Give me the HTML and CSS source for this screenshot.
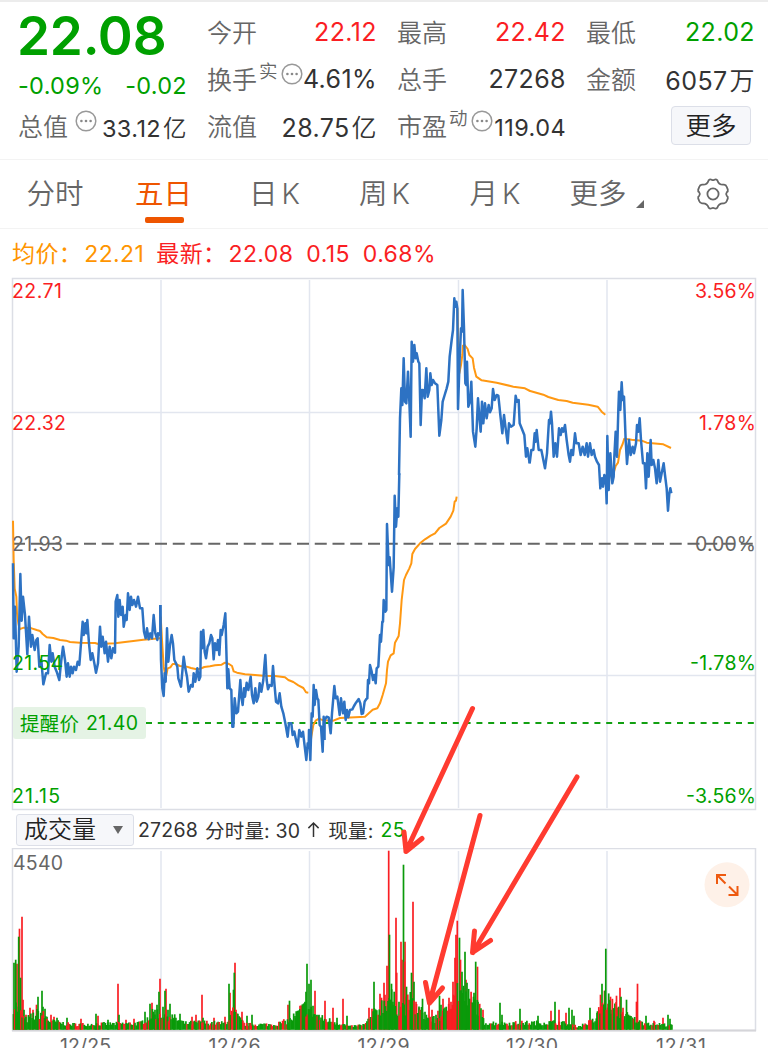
FILE: index.html
```html
<!DOCTYPE html>
<html lang="zh-CN">
<head>
    <meta charset="UTF-8">
    <meta name="viewport" content="width=device-width, initial-scale=1.0">
    <title>五日分时</title>
    <link rel="stylesheet" href="styles.css">
</head>
<body>
    <svg width="0" height="0" class="defs">
        <symbol id="dots" viewBox="0 0 22 22">
            <circle cx="11" cy="11" r="9.8" fill="none" stroke="#999" stroke-width="1.5"/>
            <circle cx="6.4" cy="11" r="1.3" fill="#888"/>
            <circle cx="11" cy="11" r="1.3" fill="#888"/>
            <circle cx="15.6" cy="11" r="1.3" fill="#888"/>
        </symbol>
    </svg>

    <header class="quote">
        <div class="main-col">
            <div class="price">22.08</div>
            <div class="change"><span>-0.09%</span><span>-0.02</span></div>
            <div class="cell small"><span class="label">总值</span><svg class="dots"><use href="#dots"/></svg><span class="value">33.12<i>亿</i></span></div>
        </div>
        <div class="col">
            <div class="cell"><span class="label">今开</span><span class="value red">22.12</span></div>
            <div class="cell"><span class="label">换手</span><sup>实</sup><svg class="dots"><use href="#dots"/></svg><span class="value">4.61%</span></div>
            <div class="cell"><span class="label">流值</span><span class="value">28.75<i>亿</i></span></div>
        </div>
        <div class="col">
            <div class="cell"><span class="label">最高</span><span class="value red">22.42</span></div>
            <div class="cell"><span class="label">总手</span><span class="value">27268</span></div>
            <div class="cell small"><span class="label">市盈</span><sup>动</sup><svg class="dots"><use href="#dots"/></svg><span class="value">119.04</span></div>
        </div>
        <div class="col">
            <div class="cell"><span class="label">最低</span><span class="value green">22.02</span></div>
            <div class="cell"><span class="label">金额</span><span class="value">6057<i>万</i></span></div>
            <div class="cell"><button class="more">更多</button></div>
        </div>
    </header>

    <nav class="tabs">
        <a>分时</a>
        <a class="active">五日</a>
        <a>日<b>K</b></a>
        <a>周<b>K</b></a>
        <a>月<b>K</b></a>
        <a class="drop">更多</a>
        <a>
            <svg class="gear" viewBox="0 0 34 34">
                <path d="M12.6 3.4 Q14 1.8 15.6 2.7 Q17 3.6 18.4 2.7 Q20 1.8 21.4 3.4 C22.6 7.2 24.4 8 28 7.6 Q30 7.8 30.8 10 L31.8 12.6 Q32.2 14.3 30.8 15.2 Q29.4 17 30.8 18.8 Q32.2 19.7 31.8 21.4 L30.8 24 Q30 26.2 28 26.4 C24.4 26 22.6 26.8 21.4 30.6 Q20 32.2 18.4 31.3 Q17 30.4 15.6 31.3 Q14 32.2 12.6 30.6 C11.4 26.8 9.6 26 6 26.4 Q4 26.2 3.2 24 L2.2 21.4 Q1.8 19.7 3.2 18.8 Q4.6 17 3.2 15.2 Q1.8 14.3 2.2 12.6 L3.2 10 Q4 7.8 6 7.6 C9.6 8 11.4 7.2 12.6 3.4Z"/>
                <circle cx="17" cy="17" r="5.6"/>
            </svg>
        </a>
    </nav>

    <div class="legend">
        <span class="orange">均价：</span><span class="orange n1">22.21</span>
        <span class="red">最新：</span><span class="red n2">22.08</span><span class="red n3">0.15</span><span class="red n4">0.68%</span>
    </div>

    <main class="charts">
        <svg class="price-chart" viewBox="0 277 768 534">
            <g class="grid">
                <path d="M161 280V808M309.5 280V808M458.5 280V808M607 280V808M12 412.5H755M12 675.5H755"/>
                <path class="frame" d="M12.5 278.5H755.5V809.5H12.5Z"/>
            </g>
            <path class="mid-line" d="M13 543.8H755"/>
            <path class="alert-line" d="M146 723H755"/>

            <g class="avg">
                <polyline transform="translate(0 500) scale(.33333)" points="39,62 41,180 44,265 49,290 51,340 55,370 59,388 63,386 72,383 95,385 110,390 120,393 128,402 140,412 160,414 180,420 198,422 210,426 240,428 285,429 295,432 345,430 375,426 400,423 430,419 481,415"/>
                <polyline transform="translate(155 580) scale(.33333)" points="17,110 21,180 26,260 30,283 34,285 38,265 46,262 53,252 62,252 75,258 95,260 108,264 125,268 137,266 148,261 165,259 180,256 200,254 210,248 222,252 231,258 236,274 246,278 270,283 300,285 325,287 360,288 390,292 400,300 415,306 430,316 445,324 453,337 460,338"/>
                <polyline transform="translate(300 480) scale(.33333)" points="30,800 34,770 40,735 47,722 57,716 70,721 100,722 120,714 195,710 218,689 232,685 240,670 248,645 258,610 261,570 264,545 272,526 281,520 285,488 296,468 300,430 305,360 312,300 318,285 328,265 334,250 337,222 345,207 360,190 375,178 392,167 405,160 418,144 438,131 452,110 460,92 464,65 468,62 470,50"/>
                <polyline transform="translate(380 275) scale(.33333)" points="232,100 238,295 243,270 247,240 249,212 254,210 263,222 268,240 278,250 282,278 289,305 305,316 350,323 400,335 435,340 450,348"/>
                <polyline transform="translate(500 360) scale(.33333)" points="88,92 130,104 145,111 175,120 200,123 218,128 265,134 293,140 305,155 316,164"/>
                <polyline transform="translate(500 360) scale(.33333)" points="320,385 330,345 342,335 347,318 354,308 360,270 368,252 373,236 395,239 425,242 440,248 490,253 513,264"/>
            </g>

            <g class="price-line">
                <polyline transform="translate(0 500) scale(.33333)" points="39,190 41,415 45,320 50,515 56,440 61,222 65,362 69,290 75,345 82,463 87,350 93,440 97,405 104,450 109,420 113,415 118,500 124,480 130,553 138,520 144,520 149,435 154,485 158,460 164,500 170,515 178,540 184,480 189,440 195,480 200,530 204,490 209,530 213,500 218,520 222,500 228,510 233,485 238,495 243,430 248,365 251,405 256,370 259,400 262,360 267,430 272,480 277,460 283,490 288,518 294,490 300,380 304,440 308,410 314,460 318,425 324,485 329,440 334,475 339,445 345,458 347,305 352,285 355,350 359,300 363,345 368,320 371,380 377,345 380,360 384,280 389,330 393,290 397,315 402,300 408,320 414,290 420,325 427,325 432,395 437,415 441,385 446,418 451,400 456,415 461,345 466,400 472,420 474,400 481,405 481,315"/>
                <polyline transform="translate(155 580) scale(.33333)" points="16,75 18,240 22,325 26,348 29,280 32,305 36,145 40,245 45,195 50,165 54,190 58,240 63,250 67,260 70,295 78,320 82,275 86,230 91,265 96,290 101,335 108,315 113,320 116,280 121,305 127,265 132,300 136,290 138,155 141,205 145,150 149,215 153,235 158,200 163,190 168,165 172,175 176,238 180,190 185,210 189,180 193,225 197,150 200,165 206,135 211,100 215,245 217,325 220,268 224,325 229,330 232,440 235,440 239,355 244,400 249,395 256,300 259,350 263,375 267,325 270,350 275,308 280,330 287,290 291,345 296,370 301,325 305,365 310,350 314,310 319,335 325,300 328,260 331,225 335,300 339,328 344,315 350,318 354,258 359,320 363,365 369,370 374,340 379,380 385,400 391,430 398,470 402,430 409,430 413,465 418,455 423,480 428,500 433,450 439,470 444,455 448,490 454,540 458,490 461,500 462,450 466,540 470,400 473,410 476,315 479,375 483,330 487,355 490,360 494,435 498,440 503,515 506,410 508,480"/>
                <polyline transform="translate(300 480) scale(.33333)" points="73,780 74,720 80,710 86,712 92,760 96,700 103,618 107,655 112,650 119,705 123,655 129,700 133,665 137,720 141,690 145,712 150,690 157,688 162,678 168,668 176,657 181,670 185,702 189,700 194,665 199,657 202,655 204,600 207,610 210,555 215,575 219,600 223,585 227,610 230,565 235,560 240,465 243,485 247,425 249,425 251,360 256,395 259,390 261,132 266,255 269,232 276,335 281,262 284,47 288,140 292,85 295,110 298,-20"/>
                <polyline transform="translate(380 275) scale(.33333)" points="57,600 60,430 64,340 67,390 71,250 75,380 79,385 84,290 88,380 92,485 95,200 99,260 103,210 107,250 110,235 115,260 118,265 122,450 126,345 129,345 134,370 139,280 143,365 148,345 151,295 155,330 159,315 165,325 172,330 178,482 184,435 188,380 194,360 200,340 205,320 209,245 215,195 219,165 223,70 226,95 229,80 232,100 234,402 239,250 243,160 246,170 248,45 252,160 256,325 259,330 261,260 265,395 270,380 274,320 279,470 286,515 290,460 294,370 298,425 302,470 306,380 310,445 315,385 320,430 326,390 330,412 335,400 339,342 344,375 350,360 355,362 361,420 367,475 372,420 377,460 383,505 387,445 393,455 401,450 407,362 411,380 416,375 419,445 425,460 433,480 438,545 442,520 449,565"/>
                <polyline transform="translate(500 360) scale(.33333)" points="89,310 94,270 100,270 104,220 107,245 110,210 116,270 124,270 130,300 135,325 141,280 147,180 150,190 153,155 156,190 161,290 166,250 171,290 177,205 182,225 186,205 190,215 195,195 200,240 206,285 210,305 214,270 219,285 225,220 229,250 236,250 242,285 248,260 254,285 260,250 264,290 270,250 275,285 281,270 285,290 291,305 297,315 301,385 306,355 309,380 313,345 318,375 320,430 322,228 326,390 331,280 337,370 341,350 343,290 347,215 351,290 355,150 357,95 361,150 365,67 368,120 372,110 377,240 381,312 387,240 392,285 398,260 402,280 408,250 411,195 415,215 419,175 423,240 429,310 434,310 438,385 442,280 446,350 452,240 455,315 460,300 465,325 470,370 475,300 480,365 485,340 491,310 495,345 500,385 504,452 508,400 511,385 514,400"/>
            </g>

            <rect x="13" y="707" width="133" height="32" rx="3" fill="#e5f3e5"/>
            <g class="axis">
                <text class="t-red" x="12" y="298" textLength="50">22.71</text>
                <text class="t-red" x="12" y="430" textLength="54">22.32</text>
                <text class="t-gray" x="12" y="550.5" textLength="51">21.93</text>
                <text class="t-green" x="12" y="670" textLength="51">21.54</text>
                <text class="t-green" x="12" y="802.5" textLength="48">21.15</text>
                <text class="t-red" x="695" y="298" textLength="61">3.56%</text>
                <text class="t-red" x="699" y="430" textLength="57">1.78%</text>
                <text class="t-gray" x="695" y="550.5" textLength="61">0.00%</text>
                <text class="t-green" x="690" y="670" textLength="66">-1.78%</text>
                <text class="t-green" x="686" y="802.5" textLength="70">-3.56%</text>
                <text class="t-green" x="20" y="730.5" textLength="59">提醒价</text>
                <text class="t-green" x="86" y="730" textLength="52">21.40</text>
            </g>
        </svg>

        <div class="indicator">
            <button class="select">成交量<span class="caret"></span></button>
            <span>27268</span>
            <span>分时量: 30</span>
            <svg class="up" viewBox="0 0 14 18"><path d="M7 17V2M1.5 7.5L7 2L12.5 7.5"/></svg>
            <span>现量:</span>
            <span class="green">25</span>
        </div>

        <svg class="volume-chart" viewBox="0 848 768 200">
            <g class="grid">
                <path d="M161 851V1030M309.5 851V1030M458.5 851V1030M607 851V1030"/>
                <path class="frame" d="M12.5 848.5H755.5V1030.5H12.5Z"/>
                <path class="base" d="M12 1030.5H756"/>
            </g>
            <g id="bars"></g>
            <g class="axis">
                <text class="t-gray" x="13" y="870" textLength="50">4540</text>
                <text class="t-gray" x="60" y="1052.5" textLength="51">12/25</text>
                <text class="t-gray" x="208.5" y="1052.5" textLength="52">12/26</text>
                <text class="t-gray" x="357.5" y="1052.5" textLength="52">12/29</text>
                <text class="t-gray" x="506" y="1052.5" textLength="52">12/30</text>
                <text class="t-gray" x="656" y="1052.5" textLength="50">12/31</text>
            </g>
            <circle cx="727" cy="884.7" r="22.5" fill="#fef1e8"/>
            <path class="expand" d="M717 884V875H726M717.5 875.5L725.5 883.5M737.500 886V895H728.500M737 894.500L729 886.500"/>
        </svg>

        <svg class="arrows" viewBox="0 277 768 771">
            <path d="M472.500 708.500L406 851.500M404 832L406 851.500L422 838.500"/>
            <path d="M480 815.500L429.500 1003M425.500 982.500L429.500 1003L442.500 988"/>
            <path d="M577 777L473 952.500M474.500 931L472.500 952.500L490.500 940.500"/>
        </svg>
    </main>

    <script src="volume.js"></script>
</body>
</html>
```
FILE: styles.css
```css
* {
    box-sizing: border-box;
}
body {
    margin: 0;
    width: 768px;
    height: 1048px;
    overflow: hidden;
    background: #fff;
    color: #333;
    font-family: Inter, "Noto Sans CJK SC", sans-serif;
}
.defs {
    position: absolute;
}
i, b {
    font-style: normal;
    font-weight: 400;
}
.red { color: #fa1e23; }
.green { color: #00a000; }
.orange { color: #ff9500; }

/* quote header */
.quote {
    display: grid;
    grid-template-columns: 169px 170px 169px 169px;
    column-gap: 20px;
    height: 160px;
    padding: 6px 14px 0 18px;
    border-top: 2px solid #ececec;
    border-bottom: 1px solid #f3f3f3;
    font-size: 25px;
}
.price {
    height: 55px;
    line-height: 56px;
    margin-left: -1px;
    font-size: 53px;
    font-weight: 600;
    letter-spacing: -0.2px;
    color: #00a000;
}
.change {
    display: flex;
    justify-content: space-between;
    height: 39px;
    line-height: 45px;
    font-size: 23.5px;
    letter-spacing: 0.3px;
    color: #00a000;
}
.cell {
    display: flex;
    align-items: center;
    height: 47px;
    white-space: nowrap;
}
.label {
    color: #666;
    font-weight: 350;
    position: relative;
    top: -1px;
}
.value {
    margin-left: auto;
    letter-spacing: 0.4px;
}
.value i {
    margin-left: 2px;
    font-weight: 350;
}
.small .value {
    font-size: 23.5px;
    padding-top: 3px;
}
.cell sup {
    margin-left: 2px;
    font-size: 18.5px;
    line-height: 1;
    color: #666;
    font-weight: 350;
    transform: translateY(-7px);
}
.dots {
    flex: none;
    width: 22px;
    height: 22px;
    margin: -9px 0 0 3px;
}
.main-col .dots {
    margin-left: 7px;
}
.more {
    width: 80px;
    height: 39px;
    margin: 0 4px 0 auto;
    padding: 0;
    border: 1.5px solid #dcdfe8;
    border-radius: 4px;
    background: #f6f7fa;
    color: #222;
    font: 350 25.5px/1 Inter, "Noto Sans CJK SC", sans-serif;
}

/* period tabs */
.tabs {
    display: grid;
    grid-template-columns: 110px 107px 115px 105px 116px 90px 125px;
    height: 69px;
    border-bottom: 1px solid #f3f3f3;
    color: #666;
    font-size: 28.5px;
    font-weight: 350;
    line-height: 68px;
    text-align: center;
}
.tabs a {
    position: relative;
}
.tabs b {
    margin-left: 4px;
    font-weight: 350;
}
.tabs .active {
    color: #ee5500;
    font-weight: 400;
}
.tabs .active::after {
    content: "";
    position: absolute;
    left: 35px;
    bottom: 5px;
    width: 39px;
    height: 6px;
    border-radius: 2px;
    background: #ee5500;
}
.drop::after {
    content: "";
    position: absolute;
    right: -1px;
    bottom: 20px;
    border-left: 8px solid transparent;
    border-bottom: 8px solid #666;
}
.gear {
    width: 34px;
    height: 34px;
    margin: -5px 0 0 15px;
    vertical-align: middle;
    fill: none;
    stroke: #666;
    stroke-width: 1.8;
}

.legend {
    display: flex;
    height: 48px;
    padding-left: 12px;
    line-height: 50px;
    font-size: 23px;
    letter-spacing: 0.4px;
    white-space: nowrap;
}
.legend .red:nth-child(3) { margin-left: 12px; }
.n1, .n2 { margin-left: 2px; }
.n3, .n4 { margin-left: 13px; }

/* charts */
.charts {
    position: relative;
    height: 771px;
}
.charts svg {
    display: block;
}
.price-chart {
    width: 768px;
    height: 534px;
}
.grid path {
    fill: none;
    stroke: #e2e6ef;
    stroke-width: 1.5;
}
.grid .frame {
    stroke: #dcdee5;
}
.grid .base {
    stroke: #d5d5d9;
    stroke-width: 2;
}
.mid-line {
    stroke: #666;
    stroke-width: 2;
    stroke-dasharray: 12 5.75;
}
.alert-line {
    stroke: #12a012;
    stroke-width: 2;
    stroke-dasharray: 6 5.8;
}
.avg polyline, .price-line polyline {
    fill: none;
    stroke: #ff9812;
    stroke-width: 2;
    stroke-linejoin: round;
    vector-effect: non-scaling-stroke;
}
.price-line polyline {
    stroke: #2d72c3;
    stroke-width: 2.5;
}
.axis {
    font-size: 19.5px;
}
.t-red { fill: #fa1e23; }
.t-green { fill: #00a000; }
.t-gray { fill: #666; }

.indicator {
    display: flex;
    align-items: center;
    height: 37px;
    padding: 0 0 0 16px;
    font-size: 19.5px;
    white-space: nowrap;
}
.indicator > span {
    margin-right: 7px;
    letter-spacing: 0.2px;
}
.select {
    display: flex;
    align-items: center;
    width: 118px;
    height: 32px;
    margin-right: 4px;
    padding: 0 0 0 7px;
    border: 1.5px solid #dcdfe8;
    border-radius: 3px;
    background: #f6f7fa;
    color: #222;
    font: 350 24px/1 Inter, "Noto Sans CJK SC", sans-serif;
}
.caret {
    margin-left: 17px;
    border: 5px solid transparent;
    border-top: 8px solid #666;
    border-bottom: 0;
}
.up {
    width: 13px;
    height: 17px;
    margin-right: 8px;
    fill: none;
    stroke: #333;
    stroke-width: 1.6;
}
.volume-chart {
    width: 768px;
    height: 200px;
}
.expand {
    fill: none;
    stroke: #ee5a10;
    stroke-width: 2;
}
.arrows {
    position: absolute;
    left: 0;
    top: 0;
    width: 768px;
    height: 771px;
    fill: none;
    stroke: #ff3b30;
    stroke-width: 5;
    stroke-linecap: round;
    stroke-linejoin: round;
}
```
FILE: volume.js
```js
// general level of the volume, [x, height]
const level = [[13,25],[25,8],[40,15],[50,7],[70,4],[140,5],[155,15],[170,12],[185,5],[200,6],[225,5],[233,15],[245,4],[275,4],[290,8],[305,20],[320,10],[340,5],[350,2],[365,4],[380,20],[390,30],[400,18],[410,25],[425,12],[435,8],[445,15],[455,40],[465,30],[478,22],[484,6],[500,5],[560,6],[578,2],[595,8],[605,28],[620,15],[640,6],[673,3]];

// single bars that stand out: x, height, g = down / r = up
const spikes = `14 67g,17 66r,15.7 70g,19.5 101r,18.7 93g,22 113r,20.5 52g,23 30r,24 20g,26 15r,30 22r,33 20r,36.5 25r,38 33g,42 39g,43 23g,45 21g,47 13g,51 15r,54 13r,57 12g,67 12g,81 11r,96 16g,98 14r,108 10g,118 46r,119 15g,126 10r,134 11r,
145 18g,150 26g,152 27r,155 20g,157 25g,160 51r,159 38g,163 23g,166 41r,165 39g,168 20g,170 26g,174 12g,180 16g,192 13r,196 15r,202 35r,203 12g,214 12r,225 13r,230 37r,229 46g,235 67r,234.3 57g,233.5 40g,236 20r,242 18r,247 14g,252 15g,
288 25r,289.5 29g,296 12g,298 18g,300 24r,302 18g,305 28g,306 38g,307 66g,309 46g,315 39r,311 50g,313 24g,317 15g,319 15g,325 29r,333 22r,337 12g,343 31r,347 14g,
369 22r,372 21r,374 48g,380 36r,381.5 32r,384 47r,385 35r,387 64r,388.7 179r,389.5 95g,391.5 46g,393 25g,396 112r,396.7 57r,399 28g,401 88r,402 70r,405 88r,403.5 165g,404.5 68r,406.5 43g,409 30r,413 128r,411.5 57g,414 48g,416 28r,419 22r,422.5 31g,425 18g,429 25r,432 20r,436 15g,438 19r,439.5 34g,441 25g,443 31r,
449 32r,451 28r,453 48r,455 72r,456 95r,457.3 109r,459.5 92g,460.5 70r,462 58g,463.5 42g,466 50r,465 78g,467 47g,469 28g,471 28r,474 37g,477.5 63r,475.7 68g,478 28g,483 20r,500 27g,502 15g,520 21g,538 14g,551 19r,555 28g,559 20r,566 17r,569 22g,572 20g,574 14g,590 22g,592 10r,597 17g,600.5 35r,599 20r,602 46g,604.5 39r,605.8 81g,608 26r,609.5 30g,610.5 33r,612 20g,614 16g,616.5 34r,617.5 22r,620 42r,621 33g,623 22r,626.5 30g,630 14r,637.5 46r,636.5 28r,638.5 8g,646 14g,654 9r,663 12r,668 15g,670 11g`;

const base = 1029.7;
const paths = [];
let seed = 7;

function rand() {
    seed = (seed * 16807) % 2147483647;
    return seed / 2147483647;
}

function levelAt(x) {
    for (let i = 1; i < level.length; i++) {
        if (x <= level[i][0]) {
            const [x0, h0] = level[i - 1];
            const [x1, h1] = level[i];
            return h0 + (h1 - h0) * (x - x0) / (x1 - x0);
        }
    }
    return 2;
}

function bar(x, h, color) {
    paths.push(`<path d="M${x.toFixed(1)} ${base}v${-h.toFixed(1)}" stroke="${color}" stroke-width="1.7"/>`);
}

spikes.split(',').forEach(item => {
    const [x, h] = item.trim().split(' ');
    bar(+x, parseFloat(h), h.endsWith('g') ? '#0a9a0a' : '#fa1e23');
});

for (let x = 13.5; x < 673; x += 1.24) {
    const redShare = x > 447 && x < 459 ? 0.8 : 0.28;
    bar(x, levelAt(x) * (0.6 + rand() * 0.9) + 1, rand() < redShare ? '#fa1e23' : '#0a9a0a');
}

document.getElementById('bars').innerHTML = paths.join('');
```
